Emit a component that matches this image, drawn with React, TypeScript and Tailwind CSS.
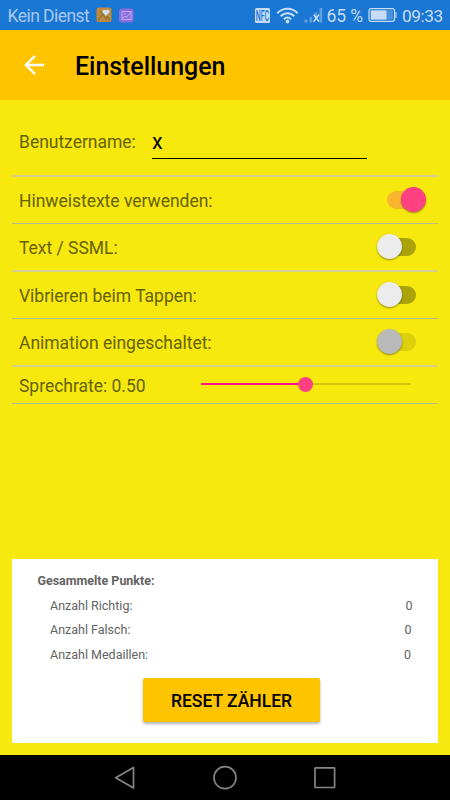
import React from 'react';
import clsx from 'clsx';

type SwitchProps = {
  on?: boolean;
  disabled?: boolean;
};

const Switch = ({ on, disabled }: SwitchProps) => (
  <div
    className={clsx(
      'relative h-[18px]',
      on ? 'w-[40px] mr-[12px]' : 'w-[39px] mr-[22px]'
    )}
  >
    <div
      className={clsx(
        'absolute top-0 h-[18px] w-[29px] rounded-full',
        on ? 'left-[0.5px] bg-[#f9b52c]' : 'right-0',
        !on && (disabled ? 'bg-[#dccf0c]' : 'bg-[#aca20a]')
      )}
    />
    <div
      className={clsx(
        'absolute -top-[4px] size-[25px] rounded-full shadow-[0_1px_2px_rgba(0,0,0,0.4)]',
        on ? 'right-0 bg-[#ff4081]' : 'left-0',
        !on && (disabled ? 'bg-[#b9b9b9]' : 'bg-[#ececec]')
      )}
    />
  </div>
);

const options = [
  { label: 'Hinweistexte verwenden:', on: true, border: 'border-b h-[47px] border-[#b5bb93]' },
  { label: 'Text / SSML:', border: 'border-b-2 h-[48px] border-[#d7cf90]' },
  { label: 'Vibrieren beim Tappen:', border: 'border-b h-[47px] border-[#b5bb93]' },
  { label: 'Animation eingeschaltet:', disabled: true, border: 'border-b-2 h-[48px] border-[#d7cf90]' },
];

const points = [
  { label: 'Anzahl Richtig:', value: 0, offset: 'pr-[25.5px]' },
  { label: 'Anzahl Falsch:', value: 0, offset: 'pr-[26.5px]' },
  { label: 'Anzahl Medaillen:', value: 0, offset: 'pr-[27px]' },
];

const StatusBar = () => (
  <div className="h-[30px] bg-[#1976d2] flex items-center pl-[7.5px] pr-[7px] text-[#c5dcf4] text-[17px] leading-[30px] whitespace-nowrap">
    <span className="w-[82px] pt-[2px] text-[17.5px] tracking-[-0.55px] text-[#a6c9ee]">Kein Dienst</span>
    <svg className="ml-[6px]" width="16" height="16" viewBox="0 0 16 16">
      <rect x="0.5" y="0.5" width="15" height="14.5" rx="2.5" fill="#c08a3c" />
      <path d="M2 13 L8 6 L14 13 M4 4 L11 13" stroke="#94733f" strokeWidth="1.3" fill="none" />
      <path d="M10 9 L6.8 5.8 C5.6 3.8 8 1.7 10 3.6 C12 1.7 14.4 3.8 13.2 5.8 Z" fill="#d3e2ef" />
    </svg>
    <svg className="ml-[7px]" width="15" height="15" viewBox="0 0 15 15">
      <rect x="0" y="0.5" width="14.5" height="14" rx="3" fill="#8a6be0" />
      <rect x="3" y="3.5" width="9" height="8" fill="none" stroke="#bdb0f0" strokeWidth="1" />
      <path d="M3.5 10.5 L6 8 L7.5 9.3 L11.5 4.5" fill="none" stroke="#bdb0f0" strokeWidth="1" />
      <circle cx="6" cy="5.8" r="0.8" fill="#bdb0f0" />
    </svg>
    <div className="ml-auto flex items-center">
      <div className="w-[15px] h-[15px] rounded-[1.5px] bg-[#c5dcf4] flex items-center justify-center">
        <span className="pt-[1px] text-[#1976d2] text-[14px] leading-none font-medium scale-x-[0.5]">NFC</span>
      </div>
      <svg className="ml-[6px]" width="23" height="17" viewBox="0 0 23 17">
        <g fill="none" stroke="#c5dcf4" strokeWidth="2">
          <path d="M1.3 6.2 C7 0.2 16 0.2 21.7 6.2" />
          <path d="M4.6 9.3 C8.5 5.2 14.5 5.2 18.4 9.3" />
          <path d="M7.8 12.3 C9.9 10 13.1 10 15.2 12.3" />
        </g>
        <circle cx="11.5" cy="14.5" r="1.9" fill="#c5dcf4" />
      </svg>
      <svg className="ml-[5px]" width="19" height="17" viewBox="0 0 19 17">
        <g fill="#5e9fe0">
          <rect x="0.5" y="12.5" width="3" height="3" rx="0.5" />
          <rect x="5.5" y="10" width="2.7" height="5.5" />
          <rect x="10.5" y="5.5" width="2.7" height="5" />
          <rect x="15.5" y="1" width="2.7" height="14.5" />
        </g>
        <path d="M9.6 7.6 L15 14.6 M15 7.6 L9.6 14.6" stroke="#d5e6f8" strokeWidth="1.5" />
      </svg>
      <span className="ml-[3.5px] w-[38px] pt-[2px] text-[17.5px] tracking-[-0.1px]">65 %</span>
      <svg className="ml-[3.5px] mr-[-0.5px]" width="30" height="16" viewBox="0 0 30 16">
        <rect x="1" y="1.7" width="25.5" height="12.6" rx="2" fill="none" stroke="#c5dcf4" strokeWidth="1.2" />
        <rect x="2.7" y="3.3" width="16" height="9.4" fill="#c5dcf4" />
        <rect x="18.7" y="3.3" width="6" height="9.4" fill="#4c93dd" />
        <path d="M27.5 5 H28.6 V11 H27.5 Z" fill="#c5dcf4" />
      </svg>
      <span className="ml-[4.5px] w-[41px] pt-[2px] text-[17.3px] tracking-[-0.45px]">09:33</span>
    </div>
  </div>
);

const NavBar = () => (
  <div className="h-[45px] bg-black flex items-center justify-center">
    <svg width="226" height="26" viewBox="0 0 226 26" fill="none" stroke="#858585" strokeWidth="1.7" strokeLinejoin="round">
      <path d="M3.7 12.7 L21.5 2.4 V23 Z" />
      <circle cx="113" cy="12.7" r="11" />
      <rect x="203" y="2.9" width="19.6" height="19.6" rx="0.5" />
    </svg>
  </div>
);

const App = () => {
  return (
    <div className="w-[450px] h-[800px] flex flex-col bg-[#f7e90e] font-['Roboto',sans-serif] overflow-hidden">
      <StatusBar />

      {/* App bar */}
      <div className="h-[70px] bg-[#ffc400] flex items-center">
        <svg className="ml-[23px]" width="23" height="22" viewBox="0 0 23 22" fill="none" stroke="#fff" strokeWidth="2.4">
          <path d="M21 11 H3 M12 1.8 L2.8 11 L12 20.2" />
        </svg>
        <h1 className="ml-[29px] pt-[3px] text-[25px] tracking-[-0.05px] font-medium text-black">Einstellungen</h1>
      </div>

      {/* Settings */}
      <div className="mx-[12px] text-[17.5px] tracking-[-0.02px] text-[#666106]">
        <div className="h-[77px] flex border-b-2 border-[#d7cf90] pl-[7px]">
          <span className="w-[133px] pt-[29px]">Benutzername:</span>
          <div className="w-[215px] h-[59px] pt-[28px] border-b border-black text-[21.5px] leading-[27px] text-black">
            x
          </div>
        </div>

        {options.map((option) => (
          <div key={option.label} className={clsx('flex items-center justify-between pl-[7px]', option.border)}>
            <span className="pt-[3px]">{option.label}</span>
            <Switch on={option.on} disabled={option.disabled} />
          </div>
        ))}

        <div className="h-[37px] flex items-center border-b border-[#b5bb93] pl-[7px]">
          <span className="w-[182px] pt-[2px]">Sprechrate: 0.50</span>
          <div className="relative w-[210px] h-[2px] mb-[2px] bg-[#d3c60c]">
            <div className="w-1/2 h-full bg-[#ff0f8f]" />
            <div className="absolute left-[97px] -top-[6.5px] size-[15px] rounded-full bg-[#ff4081]" />
          </div>
        </div>
      </div>

      {/* Score card */}
      <div className="mt-auto mb-[12px] mx-[12px] h-[184px] bg-white pt-[12px] text-[12.5px] text-[#636363]">
        <h2 className="ml-[25.5px] h-[22.5px] leading-[20px] font-bold tracking-[-0.03px]">Gesammelte Punkte:</h2>
        {points.map((point) => (
          <div key={point.label} className={clsx('h-[24.5px] pt-[1px] flex items-center justify-between pl-[38px]', point.offset)}>
            <span>{point.label}</span>
            <span>{point.value}</span>
          </div>
        ))}
        <button className="block ml-[131px] mt-[10.5px] w-[177px] h-[44px] pt-[3px] rounded-[2px] bg-[#ffc400] text-[17.5px] font-medium text-black shadow-[0_2px_3px_rgba(0,0,0,0.3)]">
          RESET ZÄHLER
        </button>
      </div>

      <NavBar />
    </div>
  );
};

export default App;
